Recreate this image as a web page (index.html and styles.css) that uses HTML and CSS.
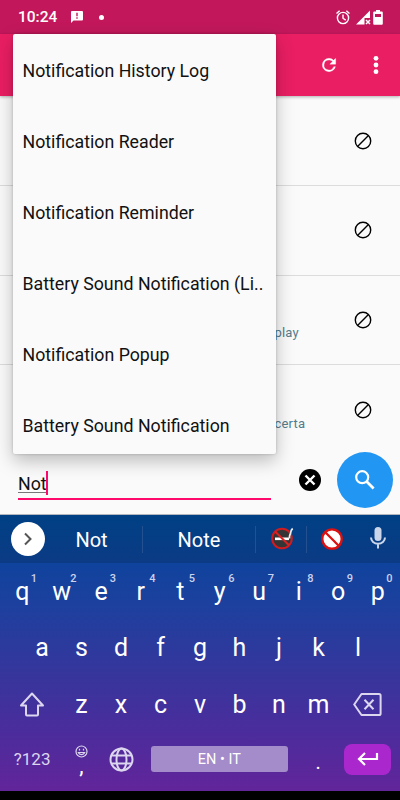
FILE: index.html
```html
<!DOCTYPE html>
<html lang="en">
<head>
    <meta charset="UTF-8">
    <meta name="viewport" content="width=device-width, initial-scale=1.0">
    <title>Notification search</title>
    <link rel="stylesheet" href="styles.css">
</head>
<body>
    <svg width="0" height="0" class="defs">
        <symbol id="block" viewBox="0 0 18 18">
            <circle cx="9" cy="9" r="7.7" fill="none" stroke="#000" stroke-width="1.4"/>
            <path d="M3.8 14.2L14.2 3.8" stroke="#000" stroke-width="1.4"/>
        </symbol>
    </svg>

    <div class="status-bar">
        <span class="clock">10:24</span>
        <svg class="message" width="12" height="12" viewBox="0 0 12 12"><path d="M1 0h10a1 1 0 0 1 1 1v7.500a1 1 0 0 1-1 1H2.500L0 12V1a1 1 0 0 1 1-1z" fill="#fff"/><path d="M6 1.800v3.400M6 6.200v1.500" stroke="#c2185b" stroke-width="1.400"/></svg>
        <span class="dot"></span>
        <div class="status-icons">
            <svg width="14" height="15" viewBox="0 0 14 15" fill="none" stroke="#fff" stroke-width="1.400"><circle cx="7" cy="8" r="5.600"/><path d="M7 4.500V8.200l2.700 1.900M.5 3.500L3.600.8M13.500 3.500L10.400.8"/></svg>
            <svg width="15" height="15" viewBox="0 0 15 15"><path d="M0 14.500L14 .5V8H8.500v6.500z" fill="#fff"/><path d="M10 10l4 4M14 10l-4 4" stroke="#fff" stroke-width="1.500"/></svg>
            <svg width="10" height="15" viewBox="0 0 10 15"><path d="M3 0h4v1.500h1.800a1 1 0 0 1 1 1v11.200a1 1 0 0 1-1 1H1.200a1 1 0 0 1-1-1V2.500a1 1 0 0 1 1-1H3z" fill="#fff"/><path d="M2 4h6v3H2z" fill="#c2185b"/></svg>
        </div>
    </div>

    <div class="app-bar">
        <svg class="refresh" width="20" height="20" viewBox="0 0 24 24"><path d="M17.650 6.350A7.960 7.960 0 0 0 12 4a8 8 0 1 0 7.730 10h-2.080A6 6 0 1 1 12 6c1.660 0 3.140.69 4.220 1.780L13 11h7V4z" fill="#fff" stroke="#fff" stroke-width=".4"/></svg>
        <svg class="more" width="6" height="20" viewBox="0 0 6 20" fill="#fff"><circle cx="3" cy="3.300" r="2.400"/><circle cx="3" cy="10" r="2.400"/><circle cx="3" cy="16.700" r="2.400"/></svg>
    </div>

    <div class="app-list">
        <div class="app-row"><svg class="block"><use href="#block"/></svg></div>
        <div class="app-row"><svg class="block"><use href="#block"/></svg></div>
        <div class="app-row"><span class="package">play</span><svg class="block"><use href="#block"/></svg></div>
        <div class="app-row"><span class="package">certa</span><svg class="block"><use href="#block"/></svg></div>
    </div>

    <div class="search-row">
        <div class="search-input"><span class="typed">Not</span><span class="caret"></span></div>
        <svg class="clear" width="22" height="22" viewBox="0 0 22 22"><circle cx="11" cy="11" r="11"/><path d="M6.500 6.500l9 9M15.500 6.500l-9 9" stroke="#fff" stroke-width="2.400"/></svg>
        <div class="fab">
            <svg width="20" height="20" viewBox="0 0 20 20" fill="none" stroke="#fff"><circle cx="7.200" cy="7.200" r="6" stroke-width="2.200"/><path d="M11.600 11.600l7 7" stroke-width="2.800"/></svg>
        </div>
    </div>

    <div class="keyboard">
        <div class="suggestions">
            <div class="expand"><svg width="10" height="14" viewBox="0 0 10 14"><path d="M2 1.500L7.500 7 2 12.500" fill="none" stroke="#555" stroke-width="2"/></svg></div>
            <div class="word">Not</div>
            <div class="word note">Note</div>
            <div class="emoji smoking">
                <svg width="24" height="24" viewBox="0 0 24 24"><circle cx="11" cy="12.500" r="9.800" fill="#353535" stroke="#cf1c20" stroke-width="2"/><path d="M4 12.800h14" stroke="#fff" stroke-width="2.600"/><path d="M18.500 12.500c-.5-4 1-3.500 1.200-6 .2-2 .8-3 2-4" fill="none" stroke="#eee" stroke-width="1.700"/><path d="M4.300 5.800l13.700 13.400" stroke="#dc2222" stroke-width="2"/></svg>
            </div>
            <div class="emoji prohibited">
                <svg width="22" height="22" viewBox="0 0 22 22"><circle cx="11" cy="11" r="9.700" fill="#fff" stroke="#dc1010" stroke-width="2.300"/><path d="M4.300 4.300l13.400 13.400" stroke="#dc1010" stroke-width="2.300"/></svg>
            </div>
            <svg class="mic" width="16" height="22" viewBox="0 0 16 22"><rect x="4.500" y="0" width="7" height="14" rx="3.500" fill="#cbd6eb"/><path d="M1 10.500a7 6.200 0 0 0 14 0M8 17v4.500" fill="none" stroke="#cbd6eb" stroke-width="2"/></svg>
        </div>

        <div class="keys">
            <div class="key-row">
                <div class="key">q<sup>1</sup></div><div class="key">w<sup>2</sup></div><div class="key">e<sup>3</sup></div><div class="key">r<sup>4</sup></div><div class="key">t<sup>5</sup></div><div class="key">y<sup>6</sup></div><div class="key">u<sup>7</sup></div><div class="key">i<sup>8</sup></div><div class="key">o<sup>9</sup></div><div class="key">p<sup>0</sup></div>
            </div>
            <div class="key-row">
                <div class="key">a</div><div class="key">s</div><div class="key">d</div><div class="key">f</div><div class="key">g</div><div class="key">h</div><div class="key">j</div><div class="key">k</div><div class="key">l</div>
            </div>
            <div class="key-row">
                <div class="key wide"><svg width="26" height="25" viewBox="0 0 26 25"><path d="M13 1.500L24 13.500H19V22.500a1 1 0 0 1-1 1H8a1 1 0 0 1-1-1V13.500H2z" fill="none" stroke="#dcd6ef" stroke-width="2" stroke-linejoin="round"/></svg></div>
                <div class="key">z</div><div class="key">x</div><div class="key">c</div><div class="key">v</div><div class="key">b</div><div class="key">n</div><div class="key">m</div>
                <div class="key wide"><svg width="29" height="23" viewBox="0 0 29 23" fill="none" stroke="#dcd6ef" stroke-width="2" stroke-linejoin="round"><path d="M8.500 1H26a1.600 1.600 0 0 1 1.600 1.600v17.800A1.600 1.600 0 0 1 26 22H8.500L1.200 11.500z"/><path d="M11.500 6.800l9 9.400M20.500 6.800l-9 9.400"/></svg></div>
            </div>
            <div class="key-row bottom">
                <div class="key wide symbols">?123</div>
                <div class="key comma">
                    <svg width="13" height="13" viewBox="0 0 13 13" fill="none" stroke="#dcd6ef" stroke-width="1.200"><circle cx="6.500" cy="6.500" r="5.500"/><path d="M3.300 7.500c1 2.700 5.400 2.700 6.400 0z"/><path d="M4.500 3.700v1.800M8.500 3.700v1.800"/></svg>
                    <span>,</span>
                </div>
                <div class="key"><svg width="25" height="25" viewBox="0 0 25 25" fill="none" stroke="#dcd6ef" stroke-width="2"><circle cx="12.500" cy="12.500" r="11"/><ellipse cx="12.500" cy="12.500" rx="5" ry="11"/><path d="M2.500 8.500h20M2.500 16.500h20"/></svg></div>
                <div class="space">EN • IT</div>
                <div class="key period">.</div>
                <div class="enter"><svg width="22" height="14" viewBox="0 0 22 14"><path d="M20 1v6H2M8 1L2 7l6 6" fill="none" stroke="#fff" stroke-width="2.200"/></svg></div>
            </div>
        </div>
    </div>

    <div class="popup">
        <div class="option">Notification History Log</div>
        <div class="option">Notification Reader</div>
        <div class="option">Notification Reminder</div>
        <div class="option">Battery Sound Notification (Li..</div>
        <div class="option">Notification Popup</div>
        <div class="option">Battery Sound Notification</div>
    </div>
</body>
</html>
```
FILE: styles.css
```css
* {
    box-sizing: border-box;
}
body {
    position: relative;
    width: 400px;
    height: 800px;
    margin: 0;
    overflow: hidden;
    display: flex;
    flex-direction: column;
    background: #000;
    font-family: Roboto, sans-serif;
}
svg {
    display: block;
    flex: none;
}
.defs {
    position: absolute;
}
.status-bar {
    height: 34px;
    flex: none;
    display: flex;
    align-items: center;
    padding: 0 17px 0 18px;
    background: #c2185b;
    color: #fff;
}
.clock {
    width: 53px;
    font-size: 15.5px;
    font-weight: 500;
}
.message {
    margin-bottom: 1px;
}
.dot {
    width: 5px;
    height: 5px;
    margin-left: 16px;
    border-radius: 50%;
    background: #fff;
}
.status-icons {
    display: flex;
    margin-left: auto;
}
.status-icons svg:nth-child(2) {
    margin: 0 2px 0 6px;
}
.app-bar {
    position: relative;
    z-index: 1;
    height: 62px;
    flex: none;
    display: flex;
    align-items: center;
    justify-content: flex-end;
    gap: 34px;
    padding-right: 21px;
    background: #e91e63;
    box-shadow: 0 1px 3px rgba(0, 0, 0, 0.3);
}
.app-list {
    height: 358px;
    flex: none;
    padding-top: 0.5px;
    background: #fafafa;
}
.app-row {
    height: 89.6px;
    display: flex;
    align-items: center;
    padding: 0 27.6px 0 274.5px;
    border-bottom: 1px solid #dcdcdc;
}
.app-row:last-child {
    border-bottom: 0;
}
.package {
    padding-top: 26px;
    font-size: 13px;
    letter-spacing: 0.2px;
    color: #547c8c;
}
.block {
    width: 18px;
    height: 18px;
    margin-left: auto;
}
.search-row {
    height: 61px;
    flex: none;
    display: flex;
    padding: 0 6.5px 0 18px;
    background: #fafafa;
    border-bottom: 1px solid #b5b5bd;
}
.search-input {
    width: 253px;
    height: 46px;
    flex: none;
    display: flex;
    align-items: flex-end;
    border-bottom: 2px solid #ff0a6c;
}
.typed {
    height: 25px;
    margin-bottom: 2px;
    font-size: 17.8px;
    line-height: 25px;
    color: #111;
    text-decoration: underline #777;
    text-decoration-thickness: 1px;
    text-underline-offset: 2px;
}
.caret {
    width: 2px;
    height: 24px;
    margin: 0 0 3px -1px;
    background: #ff0a6c;
}
.clear {
    margin: 15px 16.5px 0 28px;
}
.fab {
    width: 56px;
    height: 56px;
    flex: none;
    margin: -2px 0 0 -0.5px;
    display: flex;
    align-items: center;
    justify-content: center;
    border-radius: 50%;
    background: #2196f3;
}
.keyboard {
    height: 276px;
    flex: none;
    background: linear-gradient(#00408a 0, #0f439d 48px, #1d409e 90px, #3a349c 170px, #4c2c9c 220px, #62259a 276px);
    color: #fff;
}
.suggestions {
    height: 48px;
    display: flex;
    align-items: center;
    padding-left: 11px;
    background: linear-gradient(#004084, #0b3b84);
}
.expand {
    width: 34px;
    height: 34px;
    display: flex;
    align-items: center;
    justify-content: center;
    border-radius: 50%;
    background: #fff;
}
.word {
    width: 98px;
    height: 27px;
    padding-right: 4px;
    border-right: 1px solid #24508f;
    font-size: 20px;
    line-height: 28px;
    text-align: center;
}
.note {
    width: 113px;
    padding-right: 0;
}
.emoji {
    width: 51px;
    height: 27px;
    display: flex;
    align-items: center;
    justify-content: center;
    border-right: 1px solid #24508f;
}
.smoking {
    padding: 0 0 2px 3px;
}
.prohibited {
    padding: 0 2px 1px 0;
    border: 0;
}
.mic {
    margin: 0 0 2px 12px;
}
.keys {
    padding: 0 2.5px;
}
.key-row {
    height: 57px;
    display: flex;
    align-items: center;
    justify-content: center;
}
.key-row:nth-child(n+2) {
    padding-bottom: 2px;
}
.key {
    position: relative;
    width: 39.5px;
    display: flex;
    align-items: center;
    justify-content: center;
    font-size: 25px;
    line-height: 30px;
}
.key sup {
    position: absolute;
    top: -5px;
    right: 5px;
    font-size: 11px;
    font-weight: 500;
    line-height: 14px;
    color: #cbd3ee;
}
.wide {
    width: 59.25px;
}
.bottom {
    height: 52px;
    justify-content: flex-start;
}
.symbols {
    font-size: 17px;
    color: #dcd6ef;
}
.comma {
    flex-direction: column;
    font-size: 22px;
    line-height: 16px;
}
.space {
    width: 137px;
    height: 26px;
    margin-left: 10px;
    border-radius: 3px;
    background: #a48bc9;
    font-size: 14.5px;
    line-height: 27px;
    text-align: center;
}
.period {
    width: 61px;
    padding-top: 6px;
    font-size: 20px;
}
.enter {
    width: 47px;
    height: 31px;
    margin-left: -4.5px;
    display: flex;
    align-items: center;
    justify-content: center;
    border-radius: 8px;
    background: #aa27cd;
}
.popup {
    position: absolute;
    z-index: 2;
    top: 34px;
    left: 13px;
    width: 263px;
    height: 420px;
    border-radius: 2px;
    overflow: hidden;
    background: #fafafa;
    box-shadow: 0 7px 18px rgba(0, 0, 0, 0.25), 0 0 3px rgba(0, 0, 0, 0.2);
}
.option {
    height: 71.1px;
    padding-left: 9.5px;
    font-size: 17.75px;
    line-height: 74.5px;
    color: #111;
    white-space: nowrap;
}
```
